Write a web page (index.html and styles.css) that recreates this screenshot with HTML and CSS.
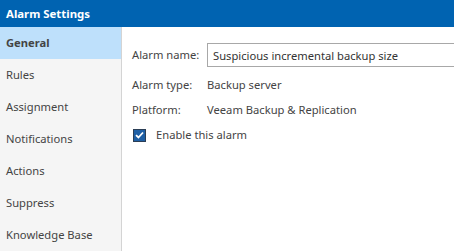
FILE: index.html
```html
<!DOCTYPE html>
<html lang="en">
<head>
  <meta charset="UTF-8">
  <title>Alarm Settings</title>
  <link rel="stylesheet" href="styles.css">
</head>
<body>
  <header class="title-bar">Alarm Settings</header>
  <div class="dialog">
    <nav class="side-nav">
      <a class="nav-item active" href="#">General</a>
      <a class="nav-item" href="#">Rules</a>
      <a class="nav-item" href="#">Assignment</a>
      <a class="nav-item" href="#">Notifications</a>
      <a class="nav-item" href="#">Actions</a>
      <a class="nav-item" href="#">Suppress</a>
      <a class="nav-item" href="#">Knowledge Base</a>
    </nav>
    <section class="general">
      <div class="field-grid">
        <label class="field-label" for="alarmName">Alarm name:</label>
        <input class="text-input" id="alarmName" type="text" value="Suspicious incremental backup size">
        <span class="field-label">Alarm type:</span>
        <span class="field-value">Backup server</span>
        <span class="field-label">Platform:</span>
        <span class="field-value">Veeam Backup &amp; Replication</span>
      </div>
      <label class="check-row">
        <span class="check-box">
          <svg width="9" height="8" viewBox="0 0 9 8"><path d="M1 4.2 L3.4 6.5 L8 1.5" fill="none" stroke="#fff" stroke-width="1.8"/></svg>
        </span>
        Enable this alarm
      </label>
    </section>
  </div>
</body>
</html>
```

FILE: styles.css
```css
html, body {
  margin: 0;
  height: 100%;
}
body {
  font-family: "Segoe UI", "Noto Sans", "Open Sans", sans-serif;
  font-size: 11.2px;
  color: #444;
  background: #fff;
  display: flex;
  flex-direction: column;
  overflow: hidden;
}
.title-bar {
  height: 28px;
  line-height: 27px;
  padding: 0 6px;
  background-color: #0063b1;
  color: white;
  font-weight: bold;
  font-size: 11.4px;
}
.dialog {
  flex: 1;
  display: flex;
}
.side-nav {
  width: 121px;
  background-color: #f5f5f5;
  border-right: 1px solid #d4d4d4;
  display: flex;
  flex-direction: column;
}
.nav-item {
  height: 32px;
  line-height: 32px;
  padding-left: 6px;
  color: #444;
  text-decoration: none;
}
.nav-item.active {
  background-color: #bee0fb;
  font-weight: bold;
}
.general {
  flex: 1;
  padding: 16px 0 0 10px;
  min-width: 0;
}
.field-grid {
  display: grid;
  grid-template-columns: 75px 1fr;
  row-gap: 9.5px;
  align-items: center;
}
.field-label,
.field-value {
  line-height: 16px;
}
.text-input {
  height: 24px;
  box-sizing: border-box;
  margin-right: -4px;
  border: 1px solid #a8a8a8;
  padding: 0 5px;
  font: inherit;
  color: #333;
  outline: none;
}
.check-row {
  display: flex;
  align-items: center;
  gap: 10px;
  margin-top: 9px;
  padding-left: 1px;
  line-height: 16px;
}
.check-box {
  width: 13px;
  height: 13px;
  box-sizing: border-box;
  background-color: #1e5fa5;
  border: 1px solid #2b3e55;
  display: flex;
  align-items: center;
  justify-content: center;
}
```
